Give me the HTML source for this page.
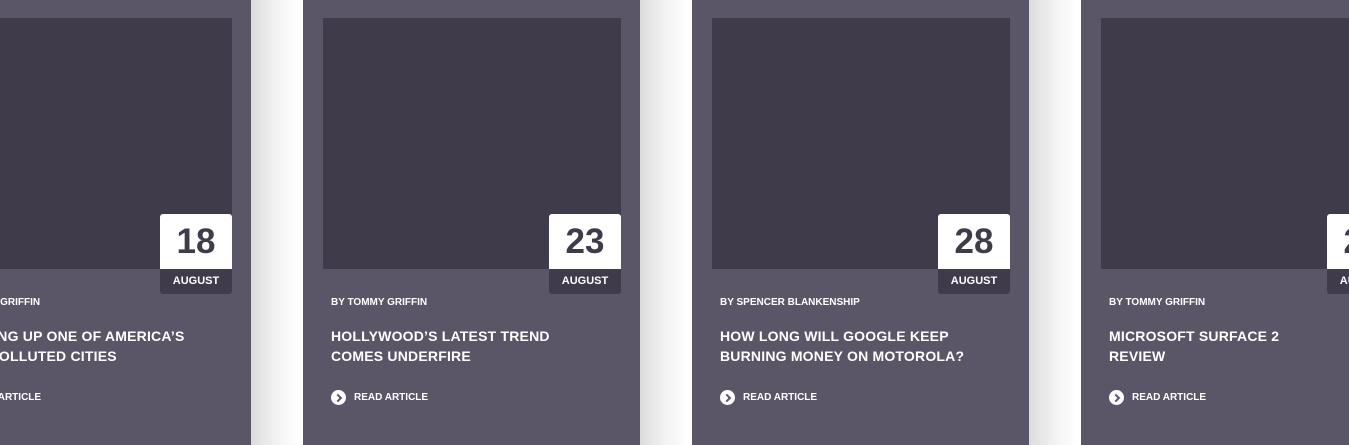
<!DOCTYPE html>
<html><head><meta charset="utf-8"><style>
body{margin:0;width:1349px;height:445px;overflow:hidden;background:#fff;position:relative;font-family:"Liberation Sans",sans-serif;}
.card{position:absolute;top:0;width:337px;height:445px;background:#5a5567;}
.card::after{content:"";position:absolute;left:337px;top:0;width:48px;height:445px;background:linear-gradient(to right,#dcdcdc,#f3f3f3 55%,#fff);}
.img{position:absolute;left:20px;top:18px;width:298px;height:251px;background:#3f3b4a;}
.date{position:absolute;left:246px;top:214px;width:72px;height:80px;border-radius:3px;overflow:hidden;background:#3f3b4a;}
.date .n{height:55px;background:#fff;color:#3f3b4a;font-weight:bold;font-size:35px;text-align:center;line-height:56px;}
.date .m{height:25px;color:#fff;font-weight:bold;font-size:11px;text-align:center;line-height:25px;}
.txt{position:absolute;left:28px;top:0;width:300px;color:#fff;font-weight:bold;}
.by{position:absolute;top:297px;font-size:10px;white-space:nowrap;}
.t{position:absolute;top:326px;font-size:14px;line-height:20px;white-space:nowrap;letter-spacing:0.2px;}
.r{position:absolute;top:390px;font-size:10px;white-space:nowrap;line-height:15px;}
.r i{display:inline-block;width:15px;height:15px;border-radius:50%;background:#fff;vertical-align:top;margin-right:8px;position:relative;}
.r i::after{content:"";position:absolute;left:4px;top:4.5px;width:4px;height:4px;border-right:2px solid #5a5567;border-top:2px solid #5a5567;transform:rotate(45deg);}
</style></head><body>
<div class="card" style="left:-86px"><div class="img"></div><div class="date"><div class="n">18</div><div class="m">AUGUST</div></div>
<div class="txt" style="left:30px"><div class="by">BY TOMMY GRIFFIN</div><div class="t">CLEANING UP ONE OF AMERICA’S<br>MOST POLLUTED CITIES</div><div class="r"><i></i>READ ARTICLE</div></div></div>
<div class="card" style="left:303px"><div class="img"></div><div class="date"><div class="n">23</div><div class="m">AUGUST</div></div>
<div class="txt"><div class="by">BY TOMMY GRIFFIN</div><div class="t">HOLLYWOOD’S LATEST TREND<br>COMES UNDERFIRE</div><div class="r"><i></i>READ ARTICLE</div></div></div>
<div class="card" style="left:692px"><div class="img"></div><div class="date"><div class="n">28</div><div class="m">AUGUST</div></div>
<div class="txt"><div class="by">BY SPENCER BLANKENSHIP</div><div class="t">HOW LONG WILL GOOGLE KEEP<br>BURNING MONEY ON MOTOROLA?</div><div class="r"><i></i>READ ARTICLE</div></div></div>
<div class="card" style="left:1081px"><div class="img"></div><div class="date"><div class="n">29</div><div class="m">AUGUST</div></div>
<div class="txt"><div class="by">BY TOMMY GRIFFIN</div><div class="t">MICROSOFT SURFACE 2<br>REVIEW</div><div class="r"><i></i>READ ARTICLE</div></div></div>
</body></html>
